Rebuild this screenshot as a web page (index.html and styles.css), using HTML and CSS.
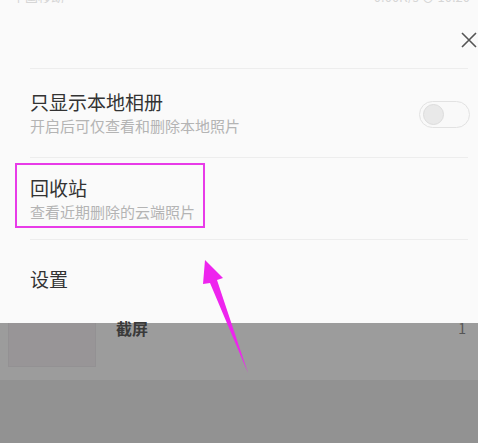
FILE: index.html
```html
<!DOCTYPE html>
<html lang="zh-CN">
<head>
    <meta charset="UTF-8">
    <meta name="viewport" content="width=device-width, initial-scale=1.0">
    <title>相册设置</title>
    <link rel="stylesheet" href="styles.css">
</head>
<body>

<div class="sheet">
    <div class="status-bar">
        <span class="status-left">中国移动</span>
        <span class="status-right">0.00K/s ⊙ 10:20</span>
    </div>
    <div class="sheet-head">
        <button class="close-btn" aria-label="关闭">
            <svg width="16" height="16" viewBox="0 0 16 16">
                <path d="M1 1 L15 15 M15 1 L1 15" stroke="#555" stroke-width="1.6" fill="none"/>
            </svg>
        </button>
    </div>
    <div class="option option-first">
        <div class="option-text">
            <div class="option-title">只显示本地相册</div>
            <div class="option-sub">开启后可仅查看和删除本地照片</div>
        </div>
        <div class="switch"><span class="knob"></span></div>
    </div>
    <div class="option option-second">
        <div class="option-text">
            <div class="option-title">回收站</div>
            <div class="option-sub">查看近期删除的云端照片</div>
        </div>
    </div>
    <div class="option option-last">
        <div class="option-text">
            <div class="option-title">设置</div>
        </div>
    </div>
</div>

<div class="behind">
    <div class="album-row">
        <div class="thumb"></div>
        <div class="album-name">截屏</div>
        <div class="album-count">1</div>
    </div>
    <div class="behind-bottom"></div>
</div>

<!-- annotation overlay -->
<div class="mark-box"></div>
<svg class="mark-arrow" width="478" height="443" viewBox="0 0 478 443">
    <polygon points="205,260 223,278 217,280 248,373 210,283 203,284" fill="#ee24ee"/>
</svg>

</body>
</html>
```

FILE: styles.css
```css
body {
    margin: 0;
    width: 478px;
    height: 443px;
    overflow: hidden;
    position: relative;
    font-family: "Noto Sans CJK SC", "Noto Sans", sans-serif;
    background-color: #939393;
}

.sheet {
    background-color: #fafafa;
    height: 323px;
    display: flex;
    flex-direction: column;
}

.status-bar {
    height: 3px;
    overflow: hidden;
    display: flex;
    justify-content: space-between;
    align-items: flex-end;
    padding: 0 8px 0 12px;
    font-size: 13px;
    line-height: 13px;
    color: #d6d6d6;
}

.status-bar span {
    margin-top: -11px;
}

.sheet-head {
    height: 65px;
    display: flex;
    justify-content: flex-end;
    align-items: center;
    padding-right: 1px;
}

.close-btn {
    border: none;
    background: none;
    padding: 0;
    width: 16px;
    height: 16px;
    margin-top: 8px;
}

.close-btn svg {
    display: block;
}

.option {
    display: flex;
    align-items: center;
    justify-content: space-between;
    margin-left: 30px;
    margin-right: 10px;
    border-top: 1px solid #ededed;
}

.option-first {
    height: 88px;
}

.option-second {
    height: 81px;
}

.option-last {
    flex: 1;
    padding-bottom: 6px;
}

.option-title {
    font-size: 19px;
    line-height: 22px;
    color: #333;
}

.option-sub {
    margin-top: 4px;
    font-size: 15px;
    line-height: 18px;
    color: #b4b4b4;
}

.switch {
    width: 46px;
    height: 25px;
    border: 1px solid #e2e2e2;
    border-radius: 14px;
    background-color: #f9f9f9;
    display: flex;
    align-items: center;
    padding-left: 3px;
    margin-top: 2px;
    margin-right: -2px;
    box-sizing: content-box;
}

.knob {
    width: 19px;
    height: 19px;
    border-radius: 50%;
    background-color: #e9e9e9;
    border: 1px solid #dcdcdc;
}

.behind {
    display: flex;
    flex-direction: column;
}

.album-row {
    height: 57px;
    background-color: #9c9c9c;
    display: flex;
    align-items: flex-start;
}

.thumb {
    width: 86px;
    height: 43px;
    margin-left: 8px;
    background-color: #989597;
    border: 1px solid #939193;
    border-top: none;
}

.album-name {
    margin-left: 20px;
    margin-top: -3px;
    font-size: 16px;
    line-height: 16px;
    font-weight: 700;
    color: #3a3a3a;
}

.album-count {
    margin-left: auto;
    margin-right: 12px;
    margin-top: -2px;
    font-size: 14px;
    line-height: 14px;
    color: #555;
}

.behind-bottom {
    height: 63px;
    background-color: #929292;
}

.mark-box {
    position: absolute;
    left: 15px;
    top: 163px;
    width: 186px;
    height: 61px;
    border: 2.5px solid #e83be8;
}

.mark-arrow {
    position: absolute;
    left: 0;
    top: 0;
}
```
